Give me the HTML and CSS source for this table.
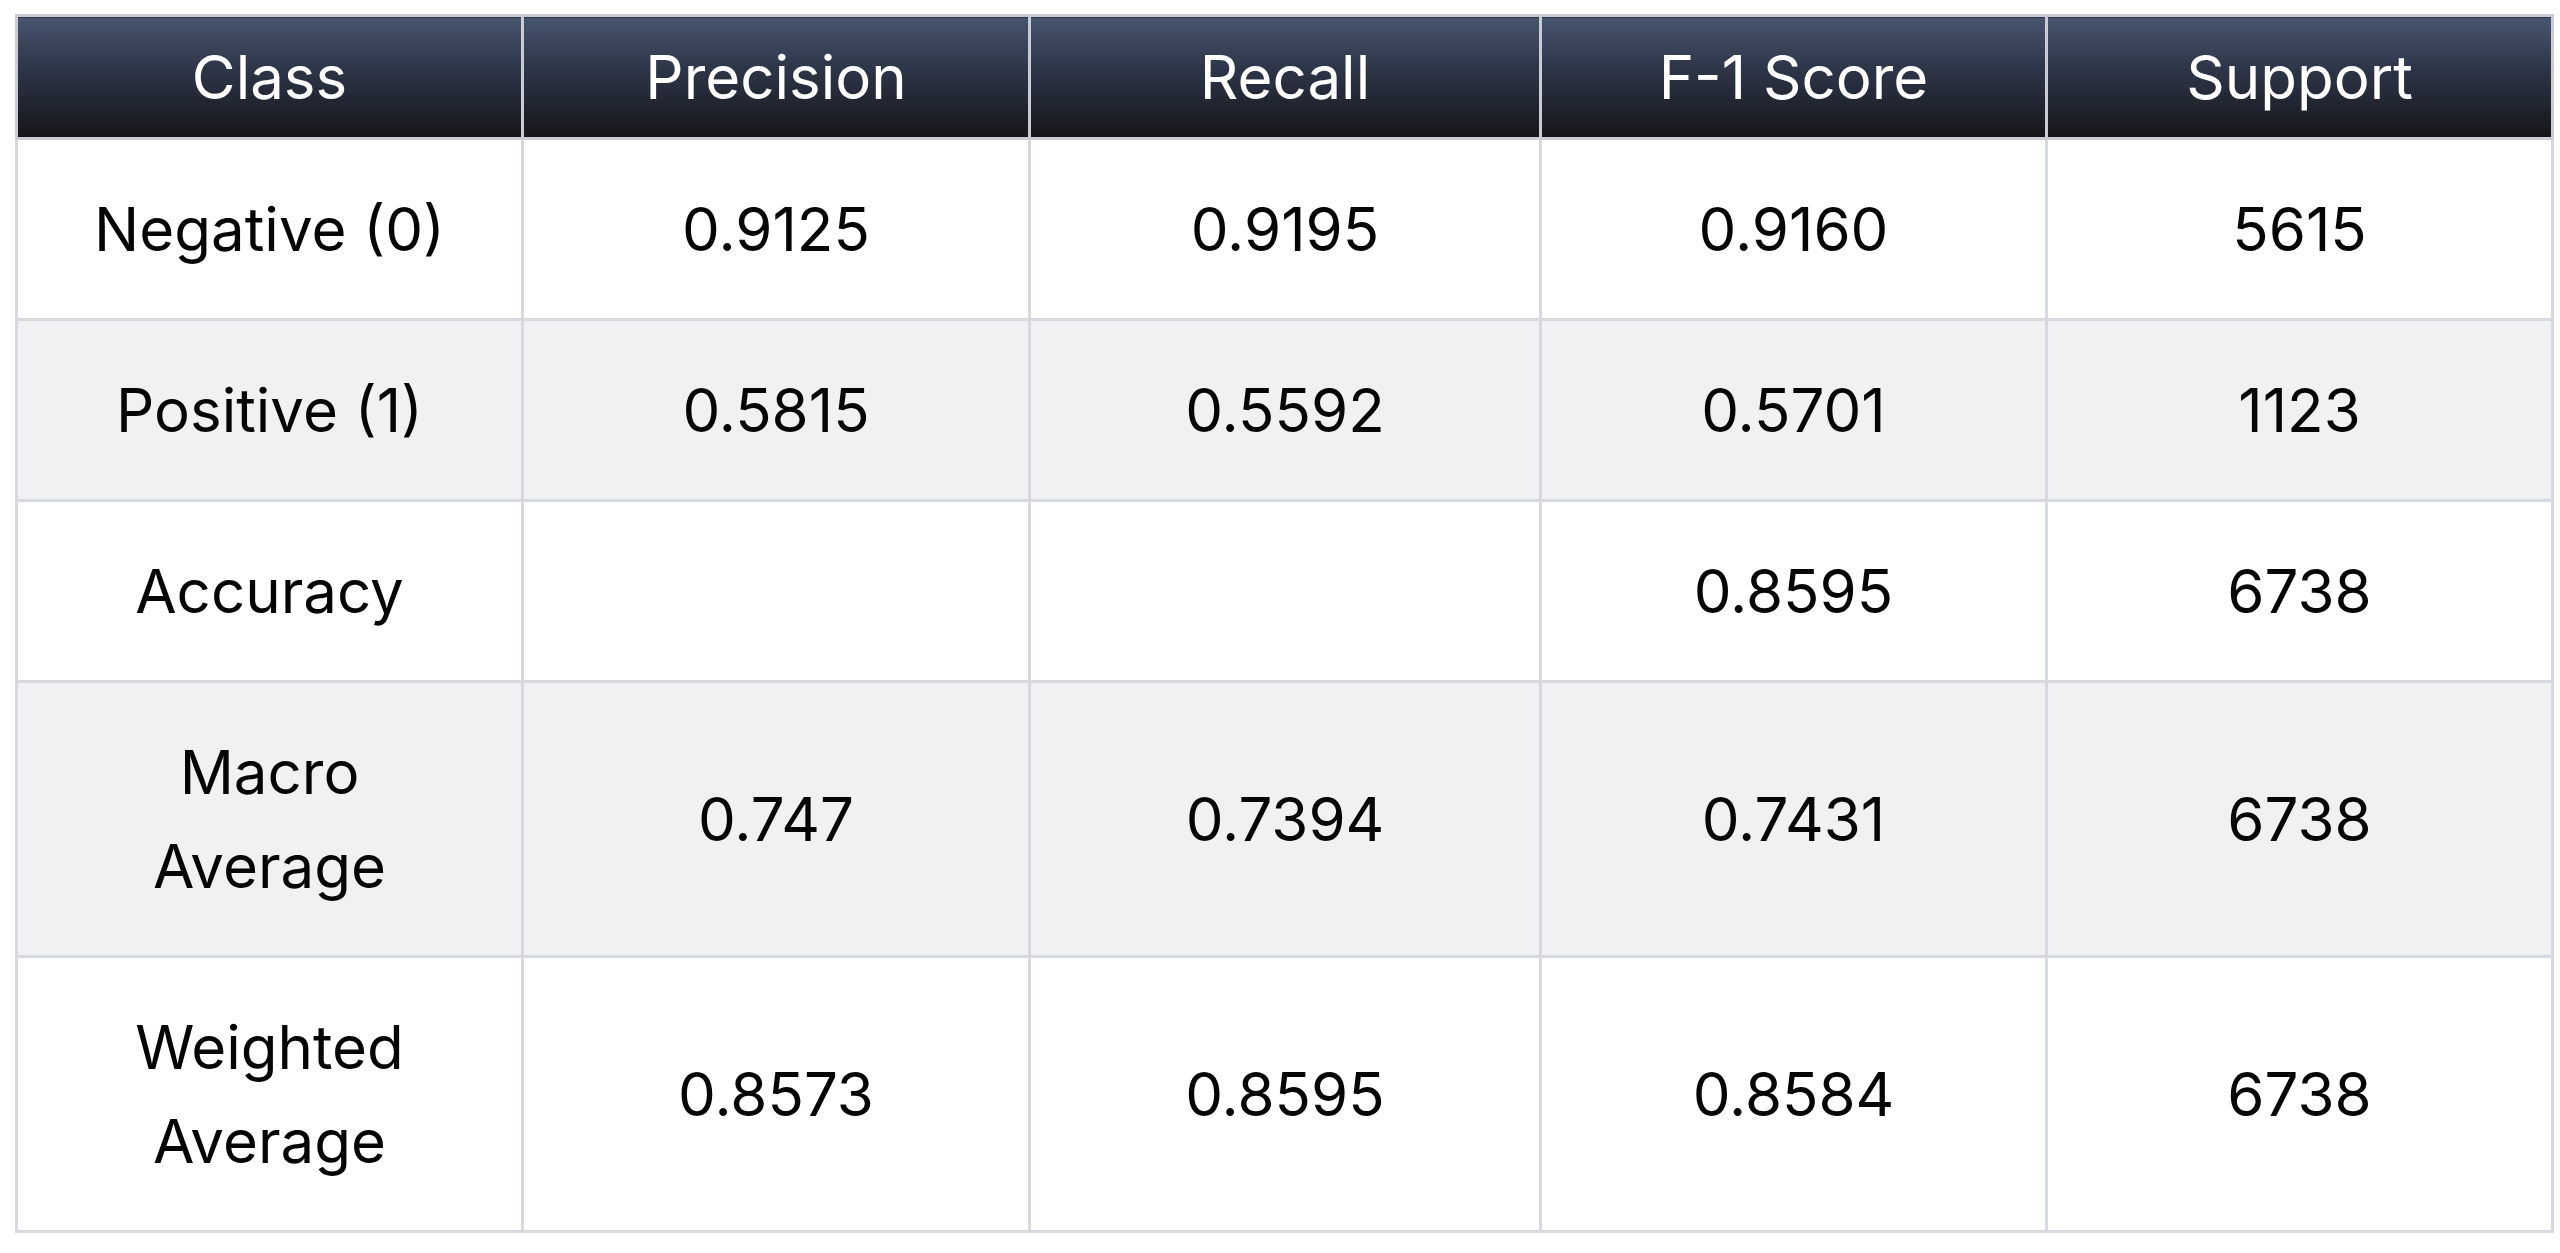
FILE: index.html
```html
<!DOCTYPE html>
<html lang="en">
<head>
<meta charset="utf-8">
<title>Classification Report</title>
<link rel="stylesheet" href="styles.css">
</head>
<body>
<table class="report">
  <colgroup>
    <col class="col-class">
    <col class="col-precision">
    <col class="col-recall">
    <col class="col-f1">
    <col class="col-support">
  </colgroup>
  <thead>
    <tr>
      <th>Class</th>
      <th>Precision</th>
      <th>Recall</th>
      <th>F-1 Score</th>
      <th>Support</th>
    </tr>
  </thead>
  <tbody>
    <tr>
      <td>Negative (0)</td>
      <td>0.9125</td>
      <td>0.9195</td>
      <td>0.9160</td>
      <td>5615</td>
    </tr>
    <tr>
      <td>Positive (1)</td>
      <td>0.5815</td>
      <td>0.5592</td>
      <td>0.5701</td>
      <td>1123</td>
    </tr>
    <tr>
      <td>Accuracy</td>
      <td></td>
      <td></td>
      <td>0.8595</td>
      <td>6738</td>
    </tr>
    <tr>
      <td>Macro<br>Average</td>
      <td>0.747</td>
      <td>0.7394</td>
      <td>0.7431</td>
      <td>6738</td>
    </tr>
    <tr>
      <td>Weighted<br>Average</td>
      <td>0.8573</td>
      <td>0.8595</td>
      <td>0.8584</td>
      <td>6738</td>
    </tr>
  </tbody>
</table>
</body>
</html>
```
FILE: styles.css
```css
html, body {
  margin: 0;
  padding: 0;
  background: #ffffff;
}

body {
  padding: 14px 0 0 15px;
  font-family: Inter, "Liberation Sans", sans-serif;
  color: #050505;
}

.report {
  width: 2536px;
  table-layout: fixed;
  border-collapse: collapse;
  font-size: 60px;
  line-height: 94px;
  border: 3px solid #d6d9e0;
}

.col-class { width: 506px; }
.col-precision { width: 507px; }
.col-recall { width: 511px; }
.col-f1 { width: 506px; }
.col-support { width: 506px; }

.report th,
.report td {
  text-align: center;
  vertical-align: middle;
  border: 3px solid #d6d9e0;
  font-weight: 400;
}

.report th {
  color: #ffffff;
  padding: 13px 10px;
  background: linear-gradient(to bottom, #48556f 0%, #2c3446 45%, #15161a 100%);
  border-color: #c9ccd4;
}

.report td {
  padding: 42px 10px;
}

.report tbody tr:nth-child(odd) td {
  background: #ffffff;
}

.report tbody tr:nth-child(even) td {
  background: #f0f1f3;
}
```
